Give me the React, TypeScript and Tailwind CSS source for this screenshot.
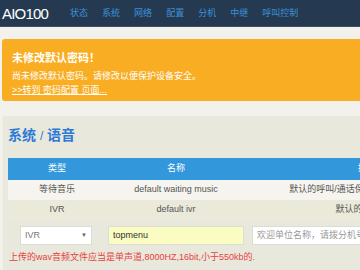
import React from "react"

const font = { fontFamily: '"Liberation Sans", "Noto Sans CJK SC", sans-serif' }

const navItems = ["状态", "系统", "网络", "配置", "分机", "中继", "呼叫控制"]

const rows = [
  { type: "等待音乐", name: "default waiting music", desc: "默认的呼叫/通话保持时播放的等待音乐", bg: "bg-[#f5f4ee]" },
  { type: "IVR", name: "default ivr", desc: "默认的语音菜单", bg: "bg-[#ebe9da]" },
]

export default function App() {
  return (
    <div className="w-[360px] h-[270px] overflow-hidden bg-[#f2f1ec]" style={font}>
      {/* top bar */}
      <div className="h-[27px] bg-[#253a51] border-b border-[#3b4f64] flex items-center">
        <span className="ml-[2px] text-white text-[15px] tracking-[-0.8px] leading-none">AIO100</span>
        <div className="ml-[22px] flex gap-[14px] text-[9px] text-[#3b8fd8] leading-none">
          {navItems.map((n) => (
            <span key={n}>{n}</span>
          ))}
        </div>
      </div>

      {/* warning */}
      <div className="mt-[12px] ml-[2px] w-[370px] h-[62px] rounded-[3px] bg-[#f9ad22] text-white px-[10px] pt-[12px]">
        <div className="text-[11px] font-bold leading-[14px]">未修改默认密码！</div>
        <div className="mt-[4px] text-[9px] leading-[14px]">尚未修改默认密码。请修改以便保护设备安全。</div>
        <div className="text-[9px] leading-[14px] underline">&gt;&gt;转到 密码配置 页面...</div>
      </div>

      {/* panel */}
      <div className="mt-[14px] ml-[2px] w-[400px] h-[200px] bg-[#e9e8dd] border-l border-t border-[#f0efe8] pl-[5px]">
        <div className="pt-[10px] text-[14px] font-bold text-[#2b7bd6] leading-[18px]">
          系统 <span className="font-normal text-[12px]">/</span> 语音
        </div>
        <div className="mt-[13px] w-[520px] text-[9px]">
          <div className="flex h-[22px] items-center bg-[#3397dc] text-white">
            <div className="w-[98px] text-center">类型</div>
            <div className="w-[140px] text-center">名称</div>
            <div className="w-[242px] text-center">描述</div>
          </div>
          {rows.map((r) => (
            <div key={r.type} className={`flex h-[20px] items-center text-[#555] ${r.bg}`}>
              <div className="w-[98px] text-center">{r.type}</div>
              <div className="w-[140px] text-center">{r.name}</div>
              <div className="w-[242px] text-center whitespace-nowrap">{r.desc}</div>
            </div>
          ))}
        </div>

        <div className="mt-[6px] flex items-center">
          <div className="ml-[12px] w-[72px] h-[19px] bg-white border border-[#dddcd4] flex items-center justify-between px-[4px] text-[9px] text-[#777]">
            <span>IVR</span>
            <span className="text-[6px] text-[#666]">▼</span>
          </div>
          <div className="ml-[16px] w-[136px] h-[19px] bg-[#fafcc2] border border-[#dddcd4] flex items-center px-[4px] text-[9px] text-[#333]">
            topmenu
          </div>
          <div className="ml-[8px] w-[140px] h-[19px] bg-white border border-[#dddcd4] flex items-center px-[4px] text-[9px] text-[#999] whitespace-nowrap overflow-hidden">
            欢迎单位名称，请拨分机号...
          </div>
        </div>

        <div className="mt-[6px] ml-[1px] text-[9px] text-[#e8413c] leading-[12px]">
          上传的wav音频文件应当是单声道,8000HZ,16bit,小于550kb的.
        </div>
      </div>
    </div>
  )
}
